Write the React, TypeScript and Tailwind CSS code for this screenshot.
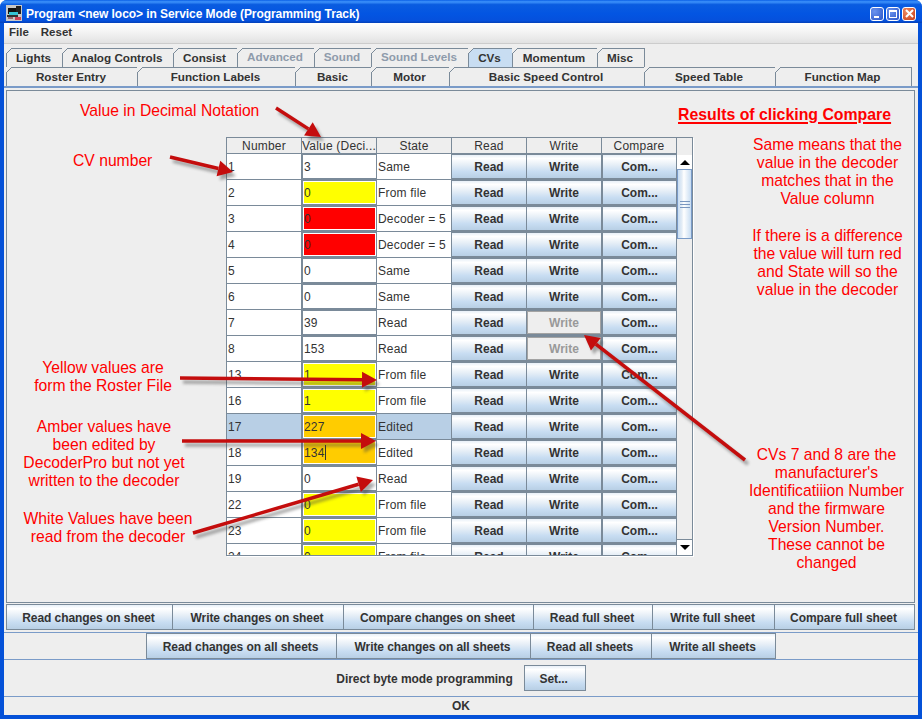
import React from "react";

const gridLine = "border-[#7a8a99]";
const sans = "font-['Liberation_Sans',Arial,sans-serif]";
const btnBg = "bg-[linear-gradient(180deg,#e8f0f8_0%,#ffffff_15%,#e4edf6_45%,#c8ddf2_72%,#b8cfe5_100%)]";

type Row = { n: string; v: string; s: string; c?: string; sel?: boolean; caret?: boolean; dis?: boolean };
const rows: Row[] = [
  { n: "1", v: "3", s: "Same" },
  { n: "2", v: "0", s: "From file", c: "bg-[#ffff00]" },
  { n: "3", v: "0", s: "Decoder = 5", c: "bg-[#ff0000]" },
  { n: "4", v: "0", s: "Decoder = 5", c: "bg-[#ff0000]" },
  { n: "5", v: "0", s: "Same" },
  { n: "6", v: "0", s: "Same" },
  { n: "7", v: "39", s: "Read", dis: true },
  { n: "8", v: "153", s: "Read", dis: true },
  { n: "13", v: "1", s: "From file", c: "bg-[#ffff00]" },
  { n: "16", v: "1", s: "From file", c: "bg-[#ffff00]" },
  { n: "17", v: "227", s: "Edited", c: "bg-[#ffcc00]", sel: true },
  { n: "18", v: "134", s: "Edited", c: "bg-[#ffcc00]", caret: true },
  { n: "19", v: "0", s: "Read" },
  { n: "22", v: "0", s: "From file", c: "bg-[#ffff00]" },
  { n: "23", v: "0", s: "From file", c: "bg-[#ffff00]" },
  { n: "24", v: "0", s: "From file", c: "bg-[#ffff00]" },
];

const tabs1: [string, number, string?][] = [
  ["Lights", 56],
  ["Analog Controls", 111],
  ["Consist", 64],
  ["Advanced", 77, "dis"],
  ["Sound", 57, "dis"],
  ["Sound Levels", 97, "dis"],
  ["CVs", 44, "sel"],
  ["Momentum", 85],
  ["Misc", 47],
];
const tabs2: [string, number][] = [
  ["Roster Entry", 131],
  ["Function Labels", 158],
  ["Basic", 76],
  ["Motor", 78],
  ["Basic Speed Control", 195],
  ["Speed Table", 131],
  ["Function Map", 136],
];

function Tab({ label, width, kind }: { label: string; width: number; kind?: string }) {
  return (
    <div
      className={`relative h-[19px] shrink-0 border-t border-r border-[#7a8a99] flex items-center justify-center pr-[2px] text-[11.7px] font-bold ${
        kind === "dis" ? "text-[#8e9bab] pb-[2px]" : "text-[#333333]"
      } ${kind === "sel" ? "bg-[#c8ddf2]" : "bg-[#eeeeee]"}`}
      style={{ width }}
    >
      {label}
      <svg className="absolute -left-px -top-px" width="6" height="6" viewBox="0 0 6 6">
        <polygon points="0,0 6,0 0,6" fill="#eeeeee" />
        <line x1="0" y1="6" x2="6" y2="0" stroke="#7a8a99" />
      </svg>
      <span className="absolute -left-px top-[5px] bottom-0 w-px bg-[#7a8a99]" />
    </div>
  );
}

function CellBtn({ label, dis }: { label: string; dis?: boolean }) {
  return (
    <div
      className={`h-[23px] flex items-center justify-center text-[12px] font-bold ${
        dis ? "bg-[#eeeeee] text-[#999999] border border-[#a3a3a3]" : `${btnBg} text-[#333333]`
      }`}
    >
      {label}
    </div>
  );
}

function TableRow({ r }: { r: Row }) {
  const sel = r.sel ? "bg-[#b8cfe5]" : "bg-white";
  return (
    <div className="grid grid-cols-[75px_75px_75px_75px_75px_75px] h-[26px] shrink-0 text-[12px] text-[#333333]">
      <div className={`${sel} border-r border-b ${gridLine} flex items-center pl-px tracking-[0.2px]`}>{r.n}</div>
      <div className="bg-[#7a8a99] pt-px pb-[2px] px-px">
        <div className="h-[23px] bg-white p-px">
          <div className={`h-[21px] ${r.c ?? "bg-white"} flex items-center tracking-[0.2px]`}>
            {r.v}
            {r.caret && <span className="w-px h-[15px] bg-[#333333]" />}
          </div>
        </div>
      </div>
      <div className={`${sel} border-r border-b ${gridLine} flex items-center pl-px tracking-[0.2px]`}>{r.s}</div>
      <div className="bg-[#7a8a99] pr-px pt-px pb-[2px]">
        <CellBtn label="Read" />
      </div>
      <div className="bg-[#7a8a99] pr-px pt-px pb-[2px]">
        <CellBtn label="Write" dis={r.dis} />
      </div>
      <div className="bg-[#7a8a99] px-px pt-px pb-[2px]">
        <CellBtn label="Com..." />
      </div>
    </div>
  );
}

function FootBtn({ label, width }: { label: string; width: number }) {
  return (
    <div
      className={`h-[26px] shrink-0 border border-[#7a8a99] -ml-px first:ml-0 pt-px pr-[2px] flex items-center justify-center text-[12px] font-bold tracking-[-0.07px] text-[#333333] ${btnBg}`}
      style={{ width }}
    >
      {label}
    </div>
  );
}

function Note({ className, lines }: { className: string; lines: string[] }) {
  return (
    <div className={`absolute text-center text-[15.7px] leading-[18px] text-[#ff0000] whitespace-nowrap ${className}`}>
      {lines.map((l, i) => (
        <div key={i}>{l}</div>
      ))}
    </div>
  );
}

const arrows: [number, number, number, number][] = [
  [276, 108, 321, 137],
  [170, 157, 233, 172],
  [180, 378, 377, 380],
  [182, 441, 376, 441],
  [193, 533, 373, 480],
  [745, 460, 584, 335],
];

function Arrow({ a, shadow }: { a: [number, number, number, number]; shadow?: boolean }) {
  const [x1, y1, x2, y2] = a;
  const d = Math.hypot(x2 - x1, y2 - y1);
  const ux = (x2 - x1) / d;
  const uy = (y2 - y1) / d;
  const bx = x2 - ux * 15;
  const by = y2 - uy * 15;
  const pts = `${x2},${y2} ${bx - uy * 8},${by + ux * 8} ${bx + uy * 8},${by - ux * 8}`;
  const col = shadow ? "#444444" : "#c40d0d";
  return (
    <g
      transform={shadow ? "translate(3 4)" : undefined}
      opacity={shadow ? 0.45 : 1}
      className={shadow ? "blur-[1.5px]" : undefined}
    >
      <line x1={x1} y1={y1} x2={bx} y2={by} stroke={col} strokeWidth={3.5} />
      <polygon points={pts} fill={col} />
    </g>
  );
}

function WinBtn({ tone, children }: { tone: string; children: React.ReactNode }) {
  return (
    <div className={`w-[14px] h-[14px] rounded-[3px] border border-white flex items-center justify-center ${tone}`}>
      {children}
    </div>
  );
}

export default function App() {
  return (
    <div className={`relative w-[922px] h-[719px] overflow-hidden bg-white ${sans}`}>
      <div className="w-full h-full flex flex-col rounded-t-[7px] overflow-hidden bg-[#0451d8]">
        {/* Title bar */}
        <div className="h-[23px] shrink-0 flex items-center pl-[6px] pr-[6px] bg-[linear-gradient(180deg,#0a5fe6_0%,#3e93fb_8%,#0a5ce0_20%,#0355e2_60%,#0550dc_90%,#0340b8_100%)]">
          <svg width="16" height="16" viewBox="0 0 16 16" className="shrink-0 mt-[3px]">
            <rect width="16" height="16" fill="#c8c8c8" />
            <rect x="2" y="3" width="8" height="6" fill="#111111" />
            <rect x="10" y="1" width="5" height="8" fill="#222222" />
            <rect x="3" y="7" width="9" height="3" fill="#35c4d4" />
            <rect x="1" y="10" width="11" height="2" fill="#333333" />
            <rect x="9" y="12" width="6" height="3" fill="#cc4455" />
            <rect x="2" y="12" width="5" height="2" fill="#9a6a70" />
          </svg>
          <span className="ml-[4px] mt-[4px] text-white font-bold text-[12px] tracking-[-0.06px] whitespace-nowrap">
            {"Program <new loco> in Service Mode (Programming Track)"}
          </span>
          <div className="ml-auto mt-[4px] flex gap-[2px]">
            <WinBtn tone="bg-[radial-gradient(circle_at_30%_30%,#6a93ee,#2a55c8)] items-end justify-start pl-[3px] pb-[2px]">
              <span className="w-[5px] h-[2px] bg-white" />
            </WinBtn>
            <WinBtn tone="bg-[radial-gradient(circle_at_30%_30%,#6a93ee,#2a55c8)]">
              <span className="w-[8px] h-[8px] border border-white border-t-2" />
            </WinBtn>
            <WinBtn tone="bg-[radial-gradient(circle_at_30%_30%,#ee8a60,#c93a16)]">
              <svg width="9" height="9" viewBox="0 0 9 9">
                <path d="M1 1 L8 8 M8 1 L1 8" stroke="white" strokeWidth="2" />
              </svg>
            </WinBtn>
          </div>
        </div>

        {/* Window body */}
        <div className="flex-1 min-h-0 mx-[4px] mb-[4px] flex flex-col bg-[#eeeeee] text-[#333333]">
          {/* Menu */}
          <div className="h-[21px] shrink-0 flex items-center gap-[12px] pl-[5px] text-[11.5px] font-bold bg-[linear-gradient(180deg,#ffffff_0%,#f2f2f2_50%,#e2e2e2_100%)] border-b border-[#cccccc]">
            <span>File</span>
            <span>Reset</span>
          </div>

          {/* Tabs */}
          <div className="h-[4px] shrink-0" />
          <div className="shrink-0 pl-[3px] flex">
            {tabs1.map(([l, w, k]) => (
              <Tab key={l} label={l} width={w} kind={k} />
            ))}
          </div>
          <div className="shrink-0 pl-[3px] flex">
            {tabs2.map(([l, w]) => (
              <Tab key={l} label={l} width={w} />
            ))}
          </div>

          {/* Sheet */}
          <div className="shrink-0 h-[517px] border-t-2 border-[#7a9bc8] pt-[2px] pl-[2px] pr-[3px]">
            <div className="h-[513px] border border-[#7a8a99] bg-[#eeeeee] pt-[46px] pl-[219px]">
              {/* Table */}
              <div className="w-[467px] h-[419px] flex border border-[#7a8a99] shadow-[1px_1px_0_#ffffff]">
                <div className="w-[450px] flex flex-col overflow-hidden">
                  <div className="grid grid-cols-[75px_75px_75px_75px_75px_75px] h-[16px] shrink-0 text-[12px] tracking-[0.2px] text-[#333333] border-b border-[#7a8a99]">
                    {["Number", "Value (Deci...", "State", "Read", "Write", "Compare"].map((h) => (
                      <div key={h} className="border-r border-[#7a8a99] flex items-center justify-center whitespace-nowrap overflow-hidden">
                        {h}
                      </div>
                    ))}
                  </div>
                  {rows.map((r) => (
                    <TableRow key={r.n} r={r} />
                  ))}
                </div>
                <div className="w-[15px] flex flex-col">
                  <div className="h-[17px] shrink-0" />
                  <div className="h-[14px] shrink-0 bg-white flex items-center justify-center">
                    <span className="w-0 h-0 border-x-[5px] border-x-transparent border-b-[5px] border-b-black" />
                  </div>
                  <div className="h-[70px] shrink-0 border border-[#7a9bc8] bg-[linear-gradient(90deg,#c8ddf2_0%,#e4edf6_30%,#ffffff_45%,#c8ddf2_100%)] flex flex-col items-center justify-center gap-[2px]">
                    <span className="w-[10px] h-px bg-[#7a97c0]" />
                    <span className="w-[10px] h-px bg-[#7a97c0]" />
                    <span className="w-[10px] h-px bg-[#7a97c0]" />
                  </div>
                  <div className="flex-1 bg-[#eeeeee]" />
                  <div className="h-[16px] shrink-0 bg-white border-t border-[#7a8a99] flex items-center justify-center">
                    <span className="w-0 h-0 border-x-[5px] border-x-transparent border-t-[5px] border-t-black" />
                  </div>
                </div>
              </div>
            </div>
          </div>

          {/* Button rows */}
          <div className="h-[30px] shrink-0 pl-[2px] pt-px border-b border-[#7a9bc8]">
            <div className="flex">
              <FootBtn label="Read changes on sheet" width={167} />
              <FootBtn label="Write changes on sheet" width={172} />
              <FootBtn label="Compare changes on sheet" width={191} />
              <FootBtn label="Read full sheet" width={120} />
              <FootBtn label="Write full sheet" width={123} />
              <FootBtn label="Compare full sheet" width={141} />
            </div>
          </div>
          <div className="h-[27px] shrink-0 flex justify-center border-b border-[#7a9bc8]">
            <FootBtn label="Read changes on all sheets" width={191} />
            <FootBtn label="Write changes on all sheets" width={195} />
            <FootBtn label="Read all sheets" width={122} />
            <FootBtn label="Write all sheets" width={125} />
          </div>
          <div className="h-[37px] shrink-0 flex items-center justify-center gap-[12px] border-b border-[#7a9bc8] text-[12px] font-bold">
            <span className="tracking-[-0.06px] mt-px">Direct byte mode programming</span>
            <FootBtn label="Set..." width={62} />
          </div>
          <div className="flex-1 flex items-center justify-center text-[12px] font-bold">OK</div>
        </div>
      </div>

      {/* Annotations */}
      <Note className="left-[80px] top-[102px]" lines={["Value in Decimal Notation"]} />
      <Note className="left-[73px] top-[152px]" lines={["CV number"]} />
      <div className="absolute left-[678px] top-[106px] text-[15.85px] leading-[18px] font-bold text-[#ff0000] underline decoration-2 underline-offset-2 whitespace-nowrap">
        Results of clicking Compare
      </div>
      <Note
        className="left-[740px] w-[175px] top-[136px]"
        lines={["Same means that the", "value in the decoder", "matches that in the", "Value column"]}
      />
      <Note
        className="left-[740px] w-[175px] top-[227px]"
        lines={["If there is a difference", "the value will turn red", "and State will so the", "value in the decoder"]}
      />
      <Note className="left-[13px] w-[180px] top-[359px]" lines={["Yellow values are", "form the Roster File"]} />
      <Note
        className="left-[14px] w-[180px] top-[418px]"
        lines={["Amber values have", "been edited by", "DecoderPro but not yet", "written to the decoder"]}
      />
      <Note
        className="left-[18px] w-[180px] top-[510px]"
        lines={["White Values have been", "read from the decoder"]}
      />
      <Note
        className="left-[739px] w-[175px] top-[446px]"
        lines={[
          "CVs 7 and 8 are the",
          "manufacturer's",
          "Identificatiiion Number",
          "and the firmware",
          "Version Number.",
          "These cannot be",
          "changed",
        ]}
      />
      <svg className="absolute inset-0 pointer-events-none" width="922" height="719">
        {arrows.map((a, i) => (
          <Arrow key={`s${i}`} a={a} shadow />
        ))}
        {arrows.map((a, i) => (
          <Arrow key={i} a={a} />
        ))}
      </svg>
    </div>
  );
}
